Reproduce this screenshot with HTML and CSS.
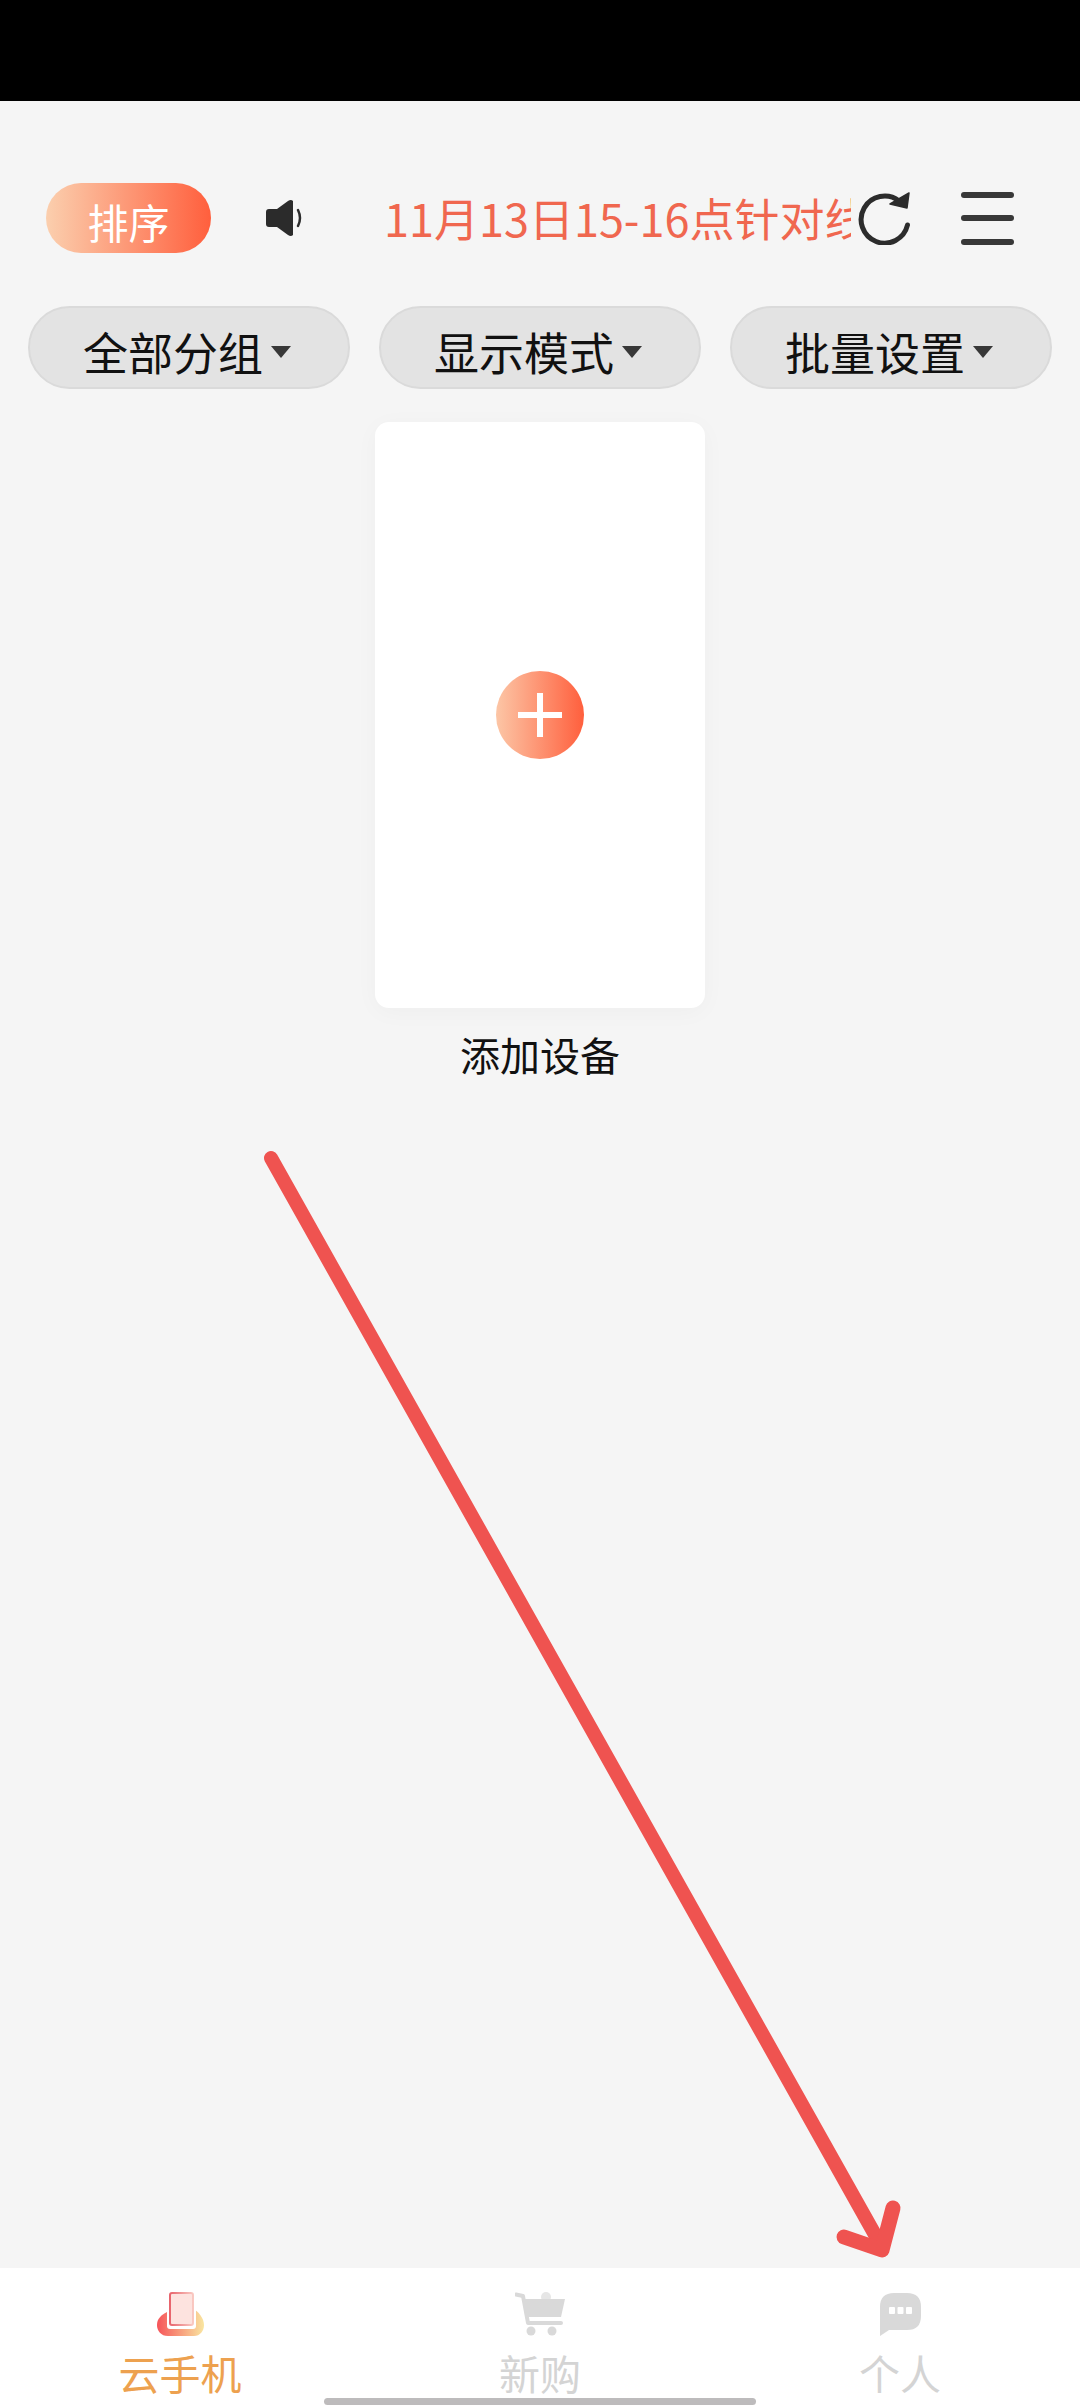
FILE: index.html
```html
<!DOCTYPE html>
<html lang="zh-CN">
<head>
    <meta charset="UTF-8">
    <meta name="viewport" content="width=device-width, initial-scale=1.0">
    <title>云手机</title>
    <link rel="stylesheet" href="styles.css">
</head>
<body>
    <div class="status-bar"></div>

    <div class="top-bar">
        <button class="sort-btn">排序</button>
        <svg class="icon-speaker" viewBox="0 0 37 36">
            <path d="M3 9h8L22 1q3-2 5 0v34q-2 2-5 0L11 27H3q-3 0-3-3V12q0-3 3-3z" fill="#2b2b2b"/>
            <path d="M32 10q4 8 0 16" fill="none" stroke="#2b2b2b" stroke-width="2.5" stroke-linecap="round"/>
        </svg>
        <div class="notice"><span>11月13日15-16点针对线路进行维护</span></div>
        <svg class="icon-refresh" viewBox="0 0 53 53">
            <path d="M49.5 33A23.5 23.5 0 1 1 41 9" fill="none" stroke="#2c2c2c" stroke-width="5" stroke-linecap="round"/>
            <path d="M51 1L49 16L32 12z" fill="#2c2c2c" stroke="#2c2c2c" stroke-width="1.5" stroke-linejoin="round"/>
        </svg>
        <div class="icon-menu"><i></i><i></i><i></i></div>
    </div>

    <div class="filters">
        <div class="filter">全部分组<i class="caret"></i></div>
        <div class="filter">显示模式<i class="caret"></i></div>
        <div class="filter">批量设置<i class="caret"></i></div>
    </div>

    <div class="device">
        <div class="device-card">
            <div class="add-btn"></div>
        </div>
        <div class="device-name">添加设备</div>
    </div>

    <div class="tabbar">
        <div class="tab tab-active">
            <svg class="tab-icon" viewBox="0 0 47 44" width="47" height="44">
                <defs>
                    <linearGradient id="cloud" x1="0" y1="0" x2="1" y2="0">
                        <stop offset="0" stop-color="#f65459"/>
                        <stop offset="1" stop-color="#f9e6a0"/>
                    </linearGradient>
                    <linearGradient id="phone" x1="0" y1="0" x2="1" y2="0">
                        <stop offset="0" stop-color="#e8646c"/>
                        <stop offset="1" stop-color="#f9c9c2"/>
                    </linearGradient>
                </defs>
                <path d="M11 44C4 44 0 39 0 33C0 27 4 23 10 20L36 17C41 19 47 26 47 33C47 39 43 44 37 44z" fill="url(#cloud)"/>
                <rect x="10" y="0" width="29" height="37" rx="3" fill="#fff"/>
                <rect x="13" y="1" width="23" height="32" rx="2" fill="#fde3df" stroke="url(#phone)" stroke-width="2"/>
            </svg>
            <span>云手机</span>
        </div>
        <div class="tab">
            <svg class="tab-icon" viewBox="0 0 50 44" width="50" height="44">
                <circle cx="31" cy="5" r="5" fill="#e6e6e6"/>
                <path d="M1 2.5L8 4L13 31H46" fill="none" stroke="#d9d9d9" stroke-width="4" stroke-linecap="round" stroke-linejoin="round"/>
                <path d="M8 7H50L46 25H11z" fill="#d9d9d9"/>
                <circle cx="16" cy="39" r="4.5" fill="#d9d9d9"/>
                <circle cx="37" cy="39" r="4.5" fill="#d9d9d9"/>
            </svg>
            <span>新购</span>
        </div>
        <div class="tab">
            <svg class="tab-icon" viewBox="0 0 41 44" width="41" height="44">
                <path d="M14 1H27Q41 1 41 15V24Q41 38 27 38H9L0 44V15Q0 1 14 1z" fill="#d9d9d9"/>
                <rect x="9" y="15" width="6" height="7" rx="1" fill="#fff"/>
                <rect x="17.5" y="15" width="6" height="7" rx="1" fill="#fff"/>
                <rect x="26" y="15" width="6" height="7" rx="1" fill="#fff"/>
            </svg>
            <span>个人</span>
        </div>
    </div>
    <div class="home-bar"></div>

    <!-- 截图上手画的箭头 -->
    <svg class="arrow" viewBox="0 0 1080 2408">
        <path d="M271 1158L878 2240" fill="none" stroke="#ef5350" stroke-width="14" stroke-linecap="round"/>
        <path d="M844 2237L882 2250L893 2208" fill="none" stroke="#ef5350" stroke-width="15" stroke-linecap="round" stroke-linejoin="round"/>
    </svg>
</body>
</html>
```

FILE: styles.css
```css
body{
    position: relative;
    width: 1080px;
    height: 2408px;
    margin: 0;
    overflow: hidden;
    display: flex;
    flex-direction: column;
    background-color: #f5f5f5;
    font-family: "Noto Sans CJK SC", "Noto Sans", sans-serif;
    color: #111;
}
.status-bar{
    height: 101px;
    background-color: #000;
}
.top-bar{
    display: flex;
    align-items: center;
    height: 70px;
    margin-top: 82px;
    padding-left: 46px;
}
.sort-btn{
    width: 165px;
    height: 70px;
    padding: 6px 0 0;
    border: none;
    border-radius: 35px;
    background: linear-gradient(90deg, #fbcfae, #ff5f3d);
    color: #fff;
    font-family: inherit;
    font-size: 41px;
}
.icon-speaker{
    width: 37px;
    height: 36px;
    margin-left: 55px;
}
.notice{
    width: 467px;
    margin-left: 81px;
    overflow: hidden;
    white-space: nowrap;
    color: #f0674f;
    font-size: 45px;
    line-height: 60px;
}
.icon-refresh{
    width: 53px;
    height: 53px;
    margin-left: 7px;
}
.icon-menu{
    width: 53px;
    height: 53px;
    margin-left: 50px;
    display: flex;
    flex-direction: column;
    justify-content: space-between;
}
.icon-menu i{
    height: 6px;
    border-radius: 3px;
    background-color: #383838;
}
.filters{
    display: flex;
    gap: 29px;
    margin-top: 53px;
    padding: 0 28px;
}
.filter{
    flex: 1;
    height: 83px;
    box-sizing: border-box;
    padding: 7px 4px 0 0;
    display: flex;
    justify-content: center;
    align-items: center;
    gap: 8px;
    border: 2px solid #dadada;
    border-radius: 42px;
    background-color: #e3e3e3;
    font-size: 45px;
}
.caret{
    width: 0;
    height: 0;
    border-top: 12px solid #383838;
    border-left: 10px solid transparent;
    border-right: 10px solid transparent;
    margin-top: 2px;
}
.device{
    display: flex;
    flex-direction: column;
    align-items: center;
    margin-top: 33px;
}
.device-card{
    width: 330px;
    height: 586px;
    display: flex;
    justify-content: center;
    align-items: center;
    border-radius: 14px;
    background-color: #fff;
    box-shadow: 0 4px 24px #00000008;
}
.add-btn{
    position: relative;
    width: 88px;
    height: 88px;
    border-radius: 50%;
    background: linear-gradient(90deg, #fcc6a6, #ff5f3d);
}
.add-btn::before,
.add-btn::after{
    content: "";
    position: absolute;
    background-color: #fff;
}
.add-btn::before{
    left: 22px;
    top: 41px;
    width: 44px;
    height: 6px;
}
.add-btn::after{
    left: 41px;
    top: 22px;
    width: 6px;
    height: 44px;
}
.device-name{
    margin-top: 18px;
    font-size: 40px;
    line-height: 56px;
}
.tabbar{
    display: flex;
    height: 140px;
    margin-top: auto;
    background-color: #fff;
}
.tab{
    flex: 1;
    display: flex;
    flex-direction: column;
    align-items: center;
    padding-top: 24px;
    color: #d4d4d4;
    font-size: 41px;
    line-height: 48px;
}
.tab span{
    margin-top: 12px;
}
.tab-active{
    color: #eda14f;
}
.home-bar{
    position: absolute;
    left: 324px;
    bottom: 3px;
    width: 432px;
    height: 7px;
    border-radius: 4px;
    background-color: #bdbbbc;
}
.arrow{
    position: absolute;
    top: 0;
    left: 0;
    width: 1080px;
    height: 2408px;
}
```
